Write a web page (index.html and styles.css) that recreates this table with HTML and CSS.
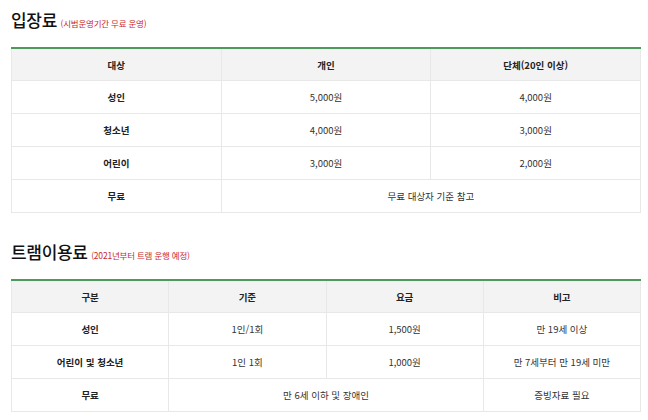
FILE: index.html
```html
<!DOCTYPE html>
<html lang="ko">
<head>
<meta charset="utf-8">
<link rel="stylesheet" href="styles.css">
</head>
<body>
<section class="sec">
  <h2 class="title">입장료 <span class="note">(시범운영기간 무료 운영)</span></h2>
  <table class="tbl t3">
    <thead>
      <tr><th>대상</th><th>개인</th><th>단체(20인 이상)</th></tr>
    </thead>
    <tbody>
      <tr><th>성인</th><td>5,000원</td><td>4,000원</td></tr>
      <tr><th>청소년</th><td>4,000원</td><td>3,000원</td></tr>
      <tr><th>어린이</th><td>3,000원</td><td>2,000원</td></tr>
      <tr><th>무료</th><td colspan="2">무료 대상자 기준 참고</td></tr>
    </tbody>
  </table>
</section>
<section class="sec sec2">
  <h2 class="title">트램이용료 <span class="note">(2021년부터 트램 운행 예정)</span></h2>
  <table class="tbl t4">
    <thead>
      <tr><th>구분</th><th>기준</th><th>요금</th><th>비고</th></tr>
    </thead>
    <tbody>
      <tr><th>성인</th><td>1인/1회</td><td>1,500원</td><td>만 19세 이상</td></tr>
      <tr><th>어린이 및 청소년</th><td>1인 1회</td><td>1,000원</td><td>만 7세부터 만 19세 미만</td></tr>
      <tr><th>무료</th><td colspan="2">만 6세 이하 및 장애인</td><td>증빙자료 필요</td></tr>
    </tbody>
  </table>
</section>
</body>
</html>
```
FILE: styles.css
```css
html, body {
  margin: 0;
  padding: 0;
  background: #fff;
}
body {
  font-family: "Noto Sans CJK KR", "Noto Sans", sans-serif;
  color: #333;
  padding: 0 7px 0 11px;
}
.sec {
  padding-top: 8px;
}
.sec2 {
  padding-top: 27px;
}
.title {
  margin: 0 0 12px 0;
  font-size: 17px;
  font-weight: 500;
  color: #111;
  line-height: 24px;
  letter-spacing: -0.3px;
}
.note {
  font-size: 8.5px;
  font-weight: 400;
  color: #c8282d;
  letter-spacing: -0.2px;
  margin-left: -1px;
}
.tbl {
  width: 630px;
  border-collapse: collapse;
  table-layout: fixed;
  border-top: 2px solid #4c9a5c;
  font-size: 9.5px;
}
.tbl th, .tbl td {
  border: 1px solid #e8e8e8;
  text-align: center;
  height: 32px;
  padding: 0;
  color: #333;
}
.tbl tr:first-child th {
  border-top: none;
}
.tbl th {
  font-weight: 700;
  color: #222;
}
.tbl thead th {
  background: #f3f3f3;
  height: 31px;
}
.t3 th, .t3 td {
  width: 33.33%;
}
.t4 th, .t4 td {
  width: 25%;
}
```
